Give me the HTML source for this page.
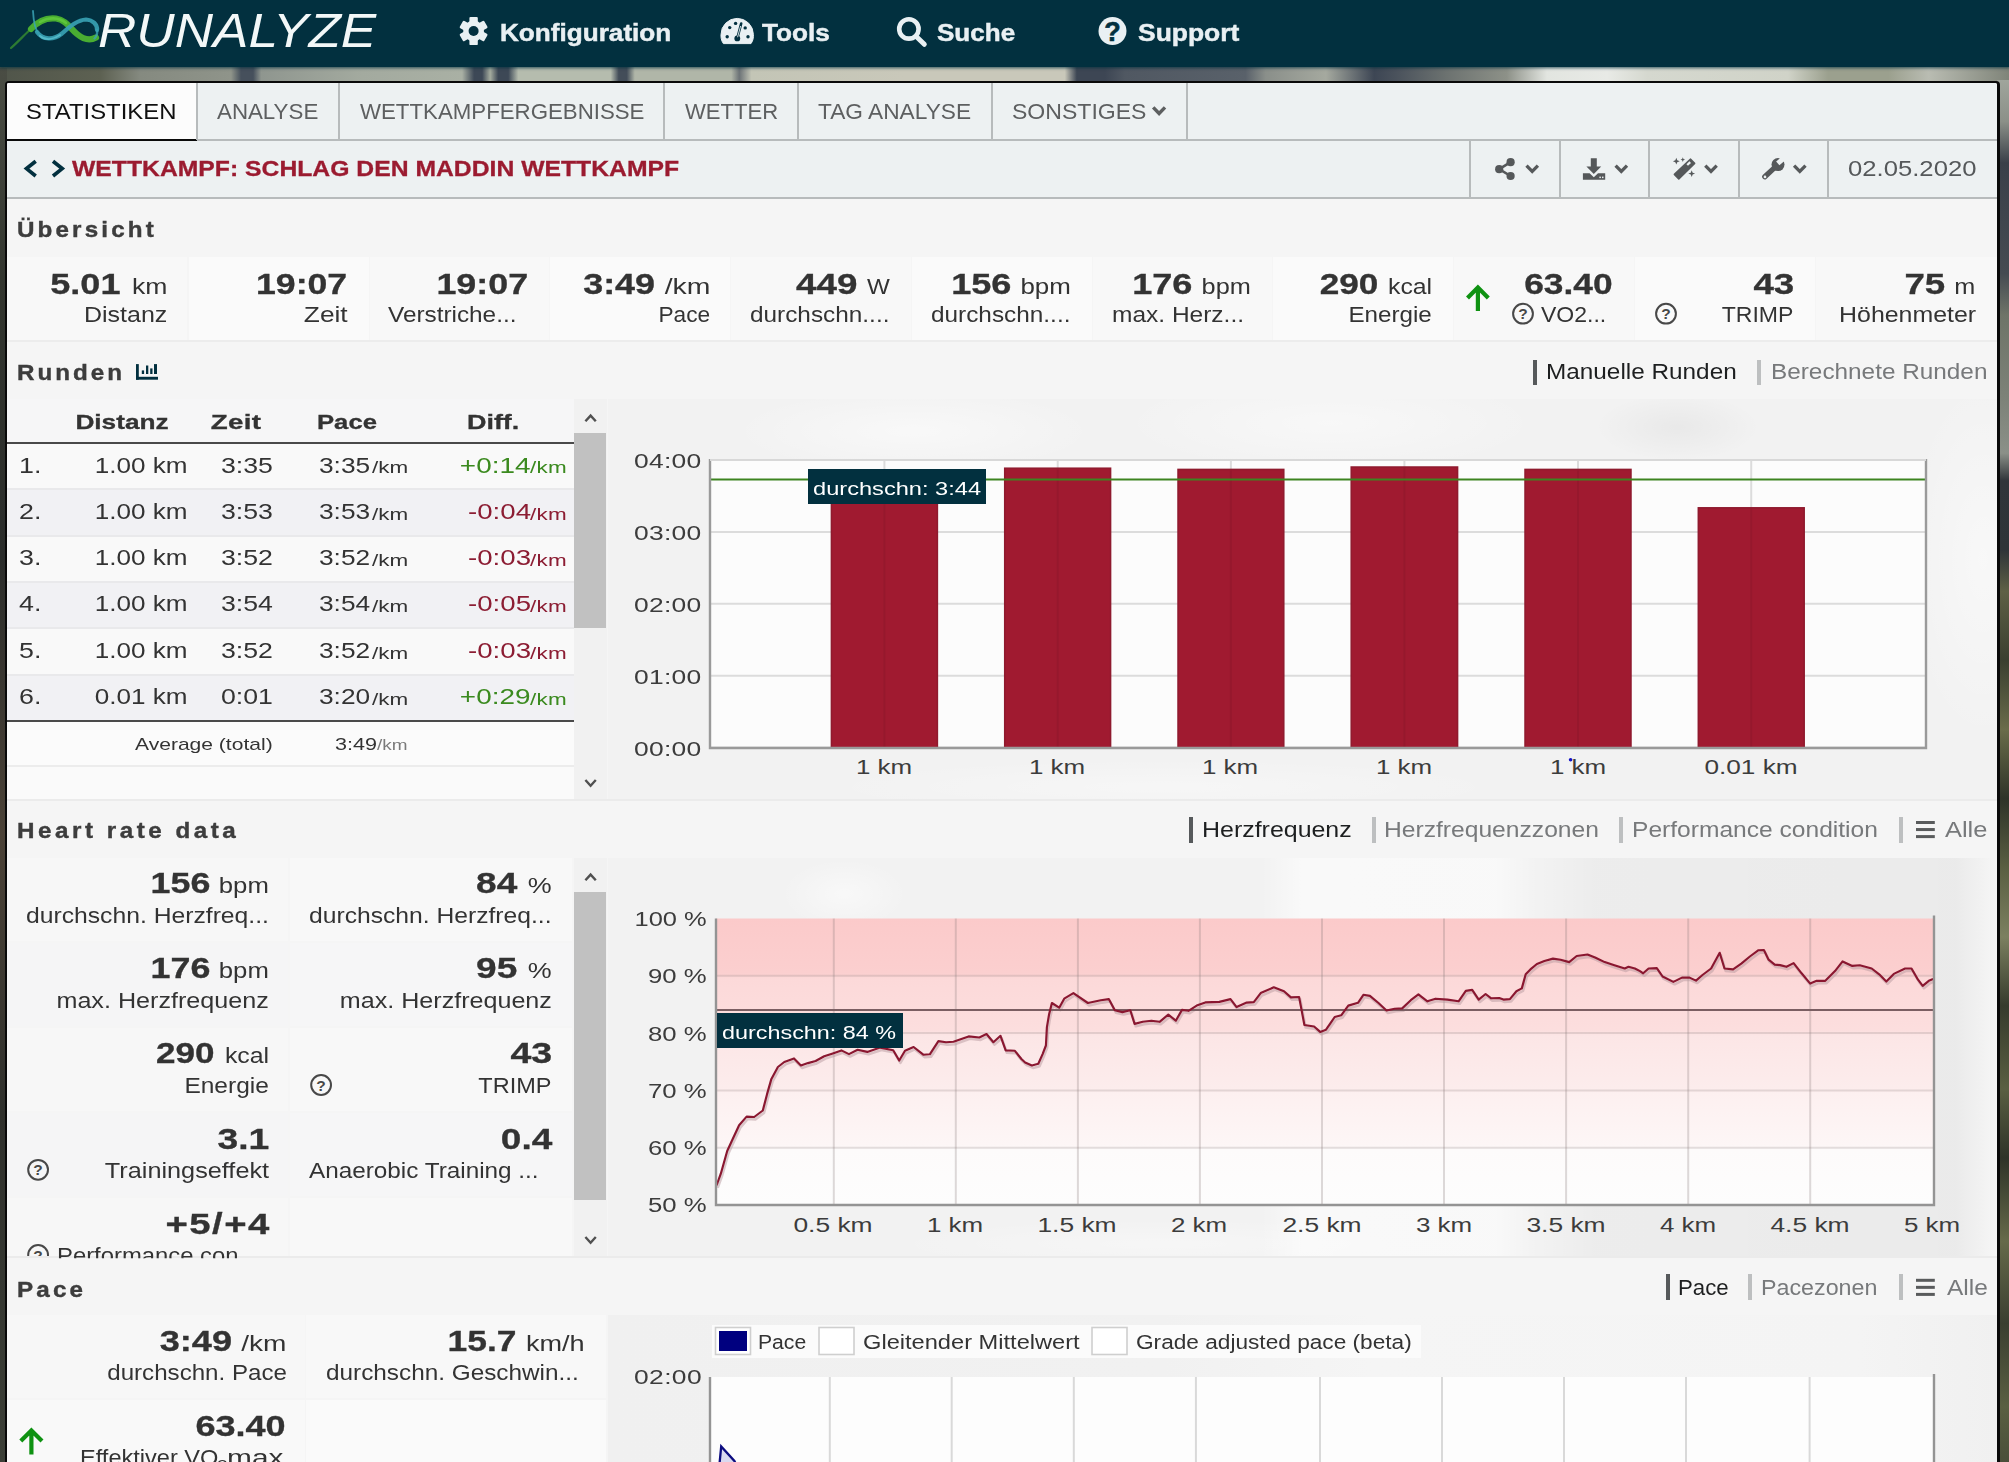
<!DOCTYPE html>
<html lang="de"><head><meta charset="utf-8"><title>RUNALYZE</title>
<style>
html,body{margin:0;padding:0}
body{width:2009px;height:1462px;overflow:hidden;position:relative;background:#6b6f63;font-family:"Liberation Sans",sans-serif}
#page{position:absolute;left:0;top:0;width:2009px;height:1462px;overflow:hidden}
#page div{position:absolute;box-sizing:border-box}
#page svg{position:absolute;overflow:visible}
.t{position:absolute;white-space:nowrap;display:block}
</style></head>
<body><div id="page">
<div style="left:0;top:0;width:2009px;height:1462px;background:linear-gradient(180deg,#5d6458 0,#6e7468 20%,#4b5150 35%,#7b8174 50%,#5b6157 65%,#868b7c 80%,#5a5f55 100%)"></div>
<div style="left:0;top:66px;width:2009px;height:17px;background:linear-gradient(90deg,#50554a 0,#5d6152 5%,#858a80 7%,#8f948a 11.5%,#46505c 12%,#46505c 12.6%,#8f968f 13%,#a3aa9f 18%,#a9b0a4 23%,#3d4856 23.6%,#3d4856 24%,#a5ac9f 24.4%,#3d4856 24.8%,#3d4856 25.3%,#b5bcae 25.8%,#b5bcae 30.4%,#434d59 30.8%,#434d59 31.2%,#b0b6a8 31.6%,#b0b6a8 36.4%,#6c7377 36.8%,#c3c5b6 37.4%,#c9c8ba 45%,#c9c8ba 53%,#3d4654 53.6%,#3d4654 55%,#505862 56%,#59616a 62%,#8a8f8a 63%,#a5a99f 66%,#3d4654 68.4%,#4a525c 69.5%,#6c7270 72%,#8d9188 75%,#e2e5e0 77%,#e8eae6 80%,#d5d8cf 82%,#d0d3c8 89%,#9ba08e 91%,#9ba08e 94%,#b9bcb2 96%,#7f8479 100%)"></div>
<div style="left:0;top:68px;width:7px;height:1394px;background:linear-gradient(180deg,#4a4d44 0,#33362f 15%,#2b2d2b 35%,#4b4237 55%,#2f302c 75%,#3c3f37 100%)"></div>
<div style="left:1997px;top:80px;width:12px;height:1382px;background:linear-gradient(180deg,#a0a59c 0,#8b9088 3%,#3a4049 6%,#454b52 14%,#6e7468 17%,#7d8278 23%,#8b9088 27%,#30353a 29%,#2f3438 34%,#5e6045 37%,#3a3f30 42%,#6a6c4a 47%,#2e3328 52%,#5a5f42 57%,#7c8060 62%,#363b2c 67%,#5a5f42 73%,#2e3328 78%,#666a4a 84%,#3a3f30 90%,#5a5f42 96%,#4a4f3a 100%)"></div>
<div style="left:0;top:0;width:2009px;height:66.5px;background:#02303f;box-shadow:0 0 3px 1px rgba(2,48,63,.75)"></div>
<div style="left:5px;top:81px;width:1995px;height:1400px;background:#0a0a0a;border-radius:4px 4px 0 0"></div>
<div style="left:7px;top:83px;width:1990px;height:1400px;background:#f5f5f5;border-radius:2px 2px 0 0"></div>
<div style="left:7px;top:83px;width:1990px;height:58px;background:#edf1f2;border-bottom:2px solid #b7bbbc;border-radius:2px 2px 0 0"></div>
<div style="left:7px;top:83px;width:190px;height:58px;background:#fcfcfc;border-bottom:2px solid #0a0a0a;border-radius:2px 0 0 0"></div>
<div style="left:196px;top:83px;width:2px;height:57px;background:#b7bbbc;"></div>
<div style="left:338px;top:83px;width:2px;height:57px;background:#b7bbbc;"></div>
<div style="left:663px;top:83px;width:2px;height:57px;background:#b7bbbc;"></div>
<div style="left:797px;top:83px;width:2px;height:57px;background:#b7bbbc;"></div>
<div style="left:991px;top:83px;width:2px;height:57px;background:#b7bbbc;"></div>
<div style="left:1186px;top:83px;width:2px;height:57px;background:#b7bbbc;"></div>
<div style="left:7px;top:141px;width:1990px;height:57.5px;background:#edf1f2;border-bottom:2px solid #b7bbbc"></div>
<div style="left:1469px;top:141px;width:2px;height:56px;background:#b7bbbc;"></div>
<div style="left:1559px;top:141px;width:2px;height:56px;background:#b7bbbc;"></div>
<div style="left:1648px;top:141px;width:2px;height:56px;background:#b7bbbc;"></div>
<div style="left:1738px;top:141px;width:2px;height:56px;background:#b7bbbc;"></div>
<div style="left:1827px;top:141px;width:2px;height:56px;background:#b7bbbc;"></div>
<div style="left:7px;top:198.5px;width:1990px;height:58.5px;background:#f5f5f5;"></div>
<div style="left:7px;top:340px;width:1990px;height:59px;background:#f5f5f5;"></div>
<div style="left:7px;top:799px;width:1990px;height:59px;background:#f5f5f5;border-top:2px solid #ebebeb"></div>
<div style="left:7px;top:1256px;width:1990px;height:59px;background:#f5f5f5;border-top:2px solid #ebebeb"></div>
<div style="left:7px;top:257px;width:179.5px;height:83px;background:#f8f8f8;"></div>
<div style="left:188.5px;top:257px;width:180.0px;height:83px;background:#fafafa;"></div>
<div style="left:369.5px;top:257px;width:179.5px;height:83px;background:#f8f8f8;"></div>
<div style="left:550px;top:257px;width:179.5px;height:83px;background:#fafafa;"></div>
<div style="left:730.5px;top:257px;width:180.5px;height:83px;background:#f8f8f8;"></div>
<div style="left:912px;top:257px;width:179.5px;height:83px;background:#fafafa;"></div>
<div style="left:1092.5px;top:257px;width:179.5px;height:83px;background:#f8f8f8;"></div>
<div style="left:1273px;top:257px;width:180px;height:83px;background:#fafafa;"></div>
<div style="left:1454px;top:257px;width:180px;height:83px;background:#f8f8f8;"></div>
<div style="left:1635px;top:257px;width:180px;height:83px;background:#fafafa;"></div>
<div style="left:1816px;top:257px;width:181px;height:83px;background:#f8f8f8;"></div>
<div style="left:7px;top:340px;width:1990px;height:2px;background:#ececec;"></div>
<div style="left:1533.4px;top:360px;width:4px;height:25px;background:#56595b;"></div>
<div style="left:1757px;top:360px;width:4px;height:25px;background:#bdbfc0;"></div>
<div style="left:1189px;top:817px;width:4px;height:26px;background:#56595b;"></div>
<div style="left:1371.5px;top:817px;width:4px;height:26px;background:#bdbfc0;"></div>
<div style="left:1619px;top:817px;width:4px;height:26px;background:#bdbfc0;"></div>
<div style="left:1899px;top:817px;width:4px;height:26px;background:#bdbfc0;"></div>
<div style="left:1665.5px;top:1274px;width:4px;height:26px;background:#56595b;"></div>
<div style="left:1748.4px;top:1274px;width:4px;height:26px;background:#bdbfc0;"></div>
<div style="left:1898.5px;top:1274px;width:4px;height:26px;background:#bdbfc0;"></div>
<div style="left:7px;top:399px;width:567px;height:400px;background:#fafafa;"></div>
<div style="left:7px;top:399px;width:567px;height:43px;background:#f6f6f7;"></div>
<div style="left:7px;top:442px;width:567px;height:2px;background:#4a4a4a;"></div>
<div style="left:7px;top:444px;width:567px;height:46px;background:#f9f9f9;border-bottom:2px solid #e9e9eb"></div>
<div style="left:7px;top:490px;width:567px;height:47px;background:#f1f1f4;border-bottom:2px solid #e9e9eb"></div>
<div style="left:7px;top:537px;width:567px;height:46px;background:#f9f9f9;border-bottom:2px solid #e9e9eb"></div>
<div style="left:7px;top:583px;width:567px;height:46px;background:#f1f1f4;border-bottom:2px solid #e9e9eb"></div>
<div style="left:7px;top:629px;width:567px;height:47px;background:#f9f9f9;border-bottom:2px solid #e9e9eb"></div>
<div style="left:7px;top:676px;width:567px;height:46px;background:#f1f1f4;"></div>
<div style="left:7px;top:720px;width:567px;height:2px;background:#4a4a4a;"></div>
<div style="left:7px;top:722px;width:567px;height:45px;background:#fbfbfb;border-bottom:2px solid #ececec"></div>
<div style="left:574px;top:399px;width:33px;height:400px;background:#f1f1f1;"></div>
<div style="left:574px;top:433px;width:32px;height:195px;background:#c1c1c1;"></div>
<svg style="left:0;top:0" width="2009" height="1462" viewBox="0 0 2009 1462"><path d="M585.4 421.3 L590.6 415.6 L595.8000000000001 421.3" fill="none" stroke="#505050" stroke-width="2.4"/><path d="M585.4 780 L590.6 785.7 L595.8000000000001 780" fill="none" stroke="#505050" stroke-width="2.4"/></svg>
<div style="left:608px;top:399px;width:1389px;height:400px;background:radial-gradient(ellipse 260px 60px at 22% 8%,rgba(255,255,255,.5),rgba(255,255,255,0) 70%),radial-gradient(ellipse 300px 70px at 52% 6%,rgba(255,255,255,.45),rgba(255,255,255,0) 70%),radial-gradient(ellipse 110px 45px at 77% 7%,rgba(0,0,0,.04),rgba(0,0,0,0) 75%),radial-gradient(ellipse 110px 260px at 99% 40%,rgba(255,255,255,.45),rgba(255,255,255,0) 70%),radial-gradient(ellipse 500px 40px at 40% 97%,rgba(255,255,255,.35),rgba(255,255,255,0) 70%),#f2f2f2;"></div>
<svg style="left:0;top:0" width="2009" height="1462" viewBox="0 0 2009 1462"><rect x="710" y="460" width="1216" height="288" fill="#fcfcfc"/><line x1="710" x2="1926" y1="460.0" y2="460.0" stroke="#dcdcdc" stroke-width="2"/><line x1="710" x2="1926" y1="531.9" y2="531.9" stroke="#dcdcdc" stroke-width="2"/><line x1="710" x2="1926" y1="603.8" y2="603.8" stroke="#dcdcdc" stroke-width="2"/><line x1="710" x2="1926" y1="675.7" y2="675.7" stroke="#dcdcdc" stroke-width="2"/><line x1="710" x2="1926" y1="747.6" y2="747.6" stroke="#dcdcdc" stroke-width="2"/><line x1="884.4" x2="884.4" y1="460" y2="748" stroke="#dcdcdc" stroke-width="2"/><line x1="1057.7" x2="1057.7" y1="460" y2="748" stroke="#dcdcdc" stroke-width="2"/><line x1="1230.9" x2="1230.9" y1="460" y2="748" stroke="#dcdcdc" stroke-width="2"/><line x1="1404.4" x2="1404.4" y1="460" y2="748" stroke="#dcdcdc" stroke-width="2"/><line x1="1578.0" x2="1578.0" y1="460" y2="748" stroke="#dcdcdc" stroke-width="2"/><line x1="1751.2" x2="1751.2" y1="460" y2="748" stroke="#dcdcdc" stroke-width="2"/><rect x="831.4" y="490.2" width="106.0" height="257.8" fill="#a01a30" stroke="#8f1a2e" stroke-width="1.5"/><line x1="884.4" x2="884.4" y1="491.2" y2="748" stroke="#8e182c" stroke-width="2" opacity=".55"/><rect x="1004.7" y="468.2" width="105.9" height="279.8" fill="#a01a30" stroke="#8f1a2e" stroke-width="1.5"/><line x1="1057.7" x2="1057.7" y1="469.2" y2="748" stroke="#8e182c" stroke-width="2" opacity=".55"/><rect x="1178.0" y="469.4" width="105.8" height="278.6" fill="#a01a30" stroke="#8f1a2e" stroke-width="1.5"/><line x1="1230.9" x2="1230.9" y1="470.4" y2="748" stroke="#8e182c" stroke-width="2" opacity=".55"/><rect x="1351.2" y="467.0" width="106.4" height="281.0" fill="#a01a30" stroke="#8f1a2e" stroke-width="1.5"/><line x1="1404.4" x2="1404.4" y1="468.0" y2="748" stroke="#8e182c" stroke-width="2" opacity=".55"/><rect x="1525.0" y="469.4" width="106.0" height="278.6" fill="#a01a30" stroke="#8f1a2e" stroke-width="1.5"/><line x1="1578.0" x2="1578.0" y1="470.4" y2="748" stroke="#8e182c" stroke-width="2" opacity=".55"/><rect x="1698.3" y="507.8" width="105.9" height="240.2" fill="#a01a30" stroke="#8f1a2e" stroke-width="1.5"/><line x1="1751.2" x2="1751.2" y1="508.8" y2="748" stroke="#8e182c" stroke-width="2" opacity=".55"/><line x1="710" x2="1926" y1="479.6" y2="479.6" stroke="#3d8420" stroke-width="2"/><path d="M710 459 V748 H1926 V459" fill="none" stroke="#9a9a9a" stroke-width="2.4"/><line x1="710" x2="1926" y1="460" y2="460" stroke="#d8d8d8" stroke-width="2"/><circle cx="1570.6" cy="759.8" r="1.8" fill="#1212c8"/></svg>
<div style="left:808px;top:469px;width:178px;height:35px;background:#02303f;"></div>
<div style="left:7px;top:858px;width:281px;height:83px;background:#f7f7f7;"></div>
<div style="left:290px;top:858px;width:282px;height:83px;background:#f8f8f8;"></div>
<div style="left:7px;top:943px;width:281px;height:83px;background:#f5f5f6;"></div>
<div style="left:290px;top:943px;width:282px;height:83px;background:#f6f6f7;"></div>
<div style="left:7px;top:1028px;width:281px;height:83px;background:#f7f7f7;"></div>
<div style="left:290px;top:1028px;width:282px;height:83px;background:#f8f8f8;"></div>
<div style="left:7px;top:1113px;width:281px;height:83px;background:#f5f5f6;"></div>
<div style="left:290px;top:1113px;width:282px;height:83px;background:#f6f6f7;"></div>
<div style="left:7px;top:1198px;width:281px;height:58px;background:#f7f7f7;"></div>
<div style="left:290px;top:1198px;width:282px;height:58px;background:#f8f8f8;"></div>
<div style="left:7px;top:858px;width:565px;height:398px;background:#f0f0f1;z-index:-1"></div>
<div style="left:574px;top:858px;width:33px;height:398px;background:#f1f1f1;"></div>
<div style="left:574px;top:892px;width:32px;height:307.5px;background:#c1c1c1;"></div>
<svg style="left:0;top:0" width="2009" height="1462" viewBox="0 0 2009 1462"><path d="M585.4 880.3 L590.6 874.6 L595.8000000000001 880.3" fill="none" stroke="#505050" stroke-width="2.4"/><path d="M585.4 1237 L590.6 1242.7 L595.8000000000001 1237" fill="none" stroke="#505050" stroke-width="2.4"/></svg>
<div style="left:608px;top:858px;width:1389px;height:398px;background:linear-gradient(90deg,rgba(255,255,255,0) 47%,rgba(255,255,255,.55) 50%,rgba(255,255,255,.5) 64%,rgba(255,255,255,0) 67%,rgba(0,0,0,.022) 71%,rgba(0,0,0,.03) 97%,rgba(255,255,255,.3) 100%),radial-gradient(ellipse 90px 50px at 17% 9%,rgba(255,255,255,.5),rgba(255,255,255,0) 70%),radial-gradient(ellipse 400px 36px at 40% 97%,rgba(255,255,255,.35),rgba(255,255,255,0) 70%),#f2f2f2;"></div>
<svg style="left:0;top:0" width="2009" height="1462" viewBox="0 0 2009 1462"><defs><linearGradient id="hrg" x1="0" y1="0" x2="0" y2="1"><stop offset="0" stop-color="#fbcaca"/><stop offset="0.19" stop-color="#fbcfcf"/><stop offset="0.21" stop-color="#fcd9d9"/><stop offset="0.39" stop-color="#fcdede"/><stop offset="0.41" stop-color="#fce6e6"/><stop offset="0.59" stop-color="#fcecec"/><stop offset="0.61" stop-color="#fdf0f0"/><stop offset="0.79" stop-color="#fdf6f6"/><stop offset="0.81" stop-color="#fdfbfb"/><stop offset="1" stop-color="#fdfdfd"/></linearGradient></defs><rect x="716" y="918.5" width="1218" height="286.5" fill="url(#hrg)"/><line x1="716" x2="1934" y1="975.8" y2="975.8" stroke="#8a7a7a" stroke-opacity=".22" stroke-width="2"/><line x1="716" x2="1934" y1="1033.1" y2="1033.1" stroke="#8a7a7a" stroke-opacity=".22" stroke-width="2"/><line x1="716" x2="1934" y1="1090.4" y2="1090.4" stroke="#8a7a7a" stroke-opacity=".22" stroke-width="2"/><line x1="716" x2="1934" y1="1147.7" y2="1147.7" stroke="#8a7a7a" stroke-opacity=".22" stroke-width="2"/><line x1="833.8" x2="833.8" y1="918.5" y2="1205" stroke="#8a7a7a" stroke-opacity=".28" stroke-width="2"/><line x1="955.8" x2="955.8" y1="918.5" y2="1205" stroke="#8a7a7a" stroke-opacity=".28" stroke-width="2"/><line x1="1077.9" x2="1077.9" y1="918.5" y2="1205" stroke="#8a7a7a" stroke-opacity=".28" stroke-width="2"/><line x1="1199.9" x2="1199.9" y1="918.5" y2="1205" stroke="#8a7a7a" stroke-opacity=".28" stroke-width="2"/><line x1="1322.0" x2="1322.0" y1="918.5" y2="1205" stroke="#8a7a7a" stroke-opacity=".28" stroke-width="2"/><line x1="1444.0" x2="1444.0" y1="918.5" y2="1205" stroke="#8a7a7a" stroke-opacity=".28" stroke-width="2"/><line x1="1566.1" x2="1566.1" y1="918.5" y2="1205" stroke="#8a7a7a" stroke-opacity=".28" stroke-width="2"/><line x1="1688.2" x2="1688.2" y1="918.5" y2="1205" stroke="#8a7a7a" stroke-opacity=".28" stroke-width="2"/><line x1="1810.2" x2="1810.2" y1="918.5" y2="1205" stroke="#8a7a7a" stroke-opacity=".28" stroke-width="2"/><path d="M716.5 1185.5 L720.8 1173.7 L727.2 1151.0 L732.6 1139.2 L739.1 1125.2 L746.6 1116.6 L754.2 1117.0 L762.8 1110.5 L767.1 1093.9 L771.4 1078.9 L777.9 1067.0 L784.3 1062.0 L794.0 1058.4 L800.9 1065.5 L808.0 1063.1 L815.6 1061.0 L824.2 1056.2 L832.8 1053.4 L841.4 1050.4 L849.0 1054.1 L857.6 1049.8 L867.3 1051.9 L880.2 1047.6 L893.2 1050.2 L899.2 1060.5 L905.0 1050.8 L913.6 1047.0 L923.3 1054.7 L929.8 1054.3 L938.4 1041.1 L946.0 1042.2 L953.5 1041.8 L968.6 1036.4 L979.4 1037.5 L986.5 1034.0 L993.4 1042.2 L1000.5 1035.8 L1005.7 1050.4 L1014.9 1050.8 L1021.4 1059.0 L1025.4 1062.7 L1025.7 1062.7 L1031.9 1065.5 L1038.3 1063.8 L1042.6 1054.1 L1045.9 1045.5 L1046.9 1027.1 L1049.1 1014.2 L1051.9 1003.0 L1059.2 1007.7 L1064.2 998.7 L1073.4 993.1 L1087.9 1003.0 L1100.8 1000.2 L1108.8 999.1 L1114.8 1010.3 L1122.4 1012.1 L1130.3 1010.3 L1134.6 1023.9 L1142.8 1021.8 L1151.4 1020.7 L1159.6 1021.8 L1168.3 1014.6 L1175.8 1020.7 L1182.0 1009.9 L1188.5 1010.8 L1196.7 1005.6 L1205.3 1002.4 L1219.3 1001.9 L1230.5 999.1 L1236.6 1007.1 L1246.7 1002.6 L1253.8 1002.1 L1260.7 993.1 L1273.8 987.3 L1284.0 991.2 L1290.9 997.4 L1299.1 997.0 L1304.4 1025.0 L1314.1 1026.5 L1320.2 1031.9 L1326.0 1029.7 L1330.0 1023.9 L1334.7 1017.0 L1341.2 1015.3 L1348.3 1005.6 L1358.0 1002.8 L1363.4 994.8 L1369.9 995.9 L1378.5 1003.0 L1386.5 1010.5 L1394.6 1008.8 L1402.2 1008.4 L1410.8 1000.2 L1418.4 994.4 L1427.4 1001.3 L1435.6 998.7 L1447.4 999.6 L1458.6 1001.3 L1465.8 990.9 L1472.2 989.9 L1478.7 999.6 L1485.6 994.0 L1491.2 998.3 L1499.2 998.0 L1503.5 999.6 L1509.9 999.1 L1516.4 991.2 L1521.8 988.4 L1525.7 974.3 L1530.4 969.4 L1536.9 964.0 L1544.4 961.0 L1553.0 958.6 L1560.6 959.7 L1569.2 962.1 L1576.7 956.0 L1587.5 954.5 L1595.1 957.5 L1604.7 962.1 L1614.4 965.3 L1624.8 968.5 L1628.5 966.8 L1634.9 968.5 L1640.0 971.1 L1643.2 973.3 L1648.6 968.5 L1656.8 968.1 L1662.6 976.5 L1673.4 981.9 L1682.0 977.6 L1689.6 977.6 L1696.0 980.6 L1702.5 975.0 L1711.1 968.5 L1719.7 952.8 L1724.5 968.5 L1733.1 969.4 L1741.3 963.6 L1749.9 956.5 L1758.5 950.2 L1763.9 950.0 L1768.6 959.7 L1774.7 964.6 L1780.1 965.1 L1786.5 966.8 L1793.6 963.1 L1801.6 973.3 L1810.2 983.6 L1816.7 980.8 L1825.3 980.8 L1835.0 971.1 L1842.6 961.4 L1852.3 965.9 L1859.8 965.3 L1871.7 968.5 L1879.2 974.3 L1886.3 981.5 L1893.8 973.9 L1905.1 968.5 L1911.5 968.5 L1918.0 979.7 L1922.7 985.8 L1928.8 980.8 L1933.1 979.1" fill="none" stroke="#b89aa0" stroke-opacity=".5" stroke-width="2.6" transform="translate(1.2,2.4)" stroke-linejoin="round"/><line x1="716" x2="1934" y1="1010" y2="1010" stroke="#7b5e62" stroke-width="2"/><path d="M716.5 1185.5 L720.8 1173.7 L727.2 1151.0 L732.6 1139.2 L739.1 1125.2 L746.6 1116.6 L754.2 1117.0 L762.8 1110.5 L767.1 1093.9 L771.4 1078.9 L777.9 1067.0 L784.3 1062.0 L794.0 1058.4 L800.9 1065.5 L808.0 1063.1 L815.6 1061.0 L824.2 1056.2 L832.8 1053.4 L841.4 1050.4 L849.0 1054.1 L857.6 1049.8 L867.3 1051.9 L880.2 1047.6 L893.2 1050.2 L899.2 1060.5 L905.0 1050.8 L913.6 1047.0 L923.3 1054.7 L929.8 1054.3 L938.4 1041.1 L946.0 1042.2 L953.5 1041.8 L968.6 1036.4 L979.4 1037.5 L986.5 1034.0 L993.4 1042.2 L1000.5 1035.8 L1005.7 1050.4 L1014.9 1050.8 L1021.4 1059.0 L1025.4 1062.7 L1025.7 1062.7 L1031.9 1065.5 L1038.3 1063.8 L1042.6 1054.1 L1045.9 1045.5 L1046.9 1027.1 L1049.1 1014.2 L1051.9 1003.0 L1059.2 1007.7 L1064.2 998.7 L1073.4 993.1 L1087.9 1003.0 L1100.8 1000.2 L1108.8 999.1 L1114.8 1010.3 L1122.4 1012.1 L1130.3 1010.3 L1134.6 1023.9 L1142.8 1021.8 L1151.4 1020.7 L1159.6 1021.8 L1168.3 1014.6 L1175.8 1020.7 L1182.0 1009.9 L1188.5 1010.8 L1196.7 1005.6 L1205.3 1002.4 L1219.3 1001.9 L1230.5 999.1 L1236.6 1007.1 L1246.7 1002.6 L1253.8 1002.1 L1260.7 993.1 L1273.8 987.3 L1284.0 991.2 L1290.9 997.4 L1299.1 997.0 L1304.4 1025.0 L1314.1 1026.5 L1320.2 1031.9 L1326.0 1029.7 L1330.0 1023.9 L1334.7 1017.0 L1341.2 1015.3 L1348.3 1005.6 L1358.0 1002.8 L1363.4 994.8 L1369.9 995.9 L1378.5 1003.0 L1386.5 1010.5 L1394.6 1008.8 L1402.2 1008.4 L1410.8 1000.2 L1418.4 994.4 L1427.4 1001.3 L1435.6 998.7 L1447.4 999.6 L1458.6 1001.3 L1465.8 990.9 L1472.2 989.9 L1478.7 999.6 L1485.6 994.0 L1491.2 998.3 L1499.2 998.0 L1503.5 999.6 L1509.9 999.1 L1516.4 991.2 L1521.8 988.4 L1525.7 974.3 L1530.4 969.4 L1536.9 964.0 L1544.4 961.0 L1553.0 958.6 L1560.6 959.7 L1569.2 962.1 L1576.7 956.0 L1587.5 954.5 L1595.1 957.5 L1604.7 962.1 L1614.4 965.3 L1624.8 968.5 L1628.5 966.8 L1634.9 968.5 L1640.0 971.1 L1643.2 973.3 L1648.6 968.5 L1656.8 968.1 L1662.6 976.5 L1673.4 981.9 L1682.0 977.6 L1689.6 977.6 L1696.0 980.6 L1702.5 975.0 L1711.1 968.5 L1719.7 952.8 L1724.5 968.5 L1733.1 969.4 L1741.3 963.6 L1749.9 956.5 L1758.5 950.2 L1763.9 950.0 L1768.6 959.7 L1774.7 964.6 L1780.1 965.1 L1786.5 966.8 L1793.6 963.1 L1801.6 973.3 L1810.2 983.6 L1816.7 980.8 L1825.3 980.8 L1835.0 971.1 L1842.6 961.4 L1852.3 965.9 L1859.8 965.3 L1871.7 968.5 L1879.2 974.3 L1886.3 981.5 L1893.8 973.9 L1905.1 968.5 L1911.5 968.5 L1918.0 979.7 L1922.7 985.8 L1928.8 980.8 L1933.1 979.1" fill="none" stroke="#8a1730" stroke-width="2.15" stroke-linejoin="round"/><path d="M716 918.5 V1205 H1934 V915.5" fill="none" stroke="#949494" stroke-width="2.4"/></svg>
<div style="left:717px;top:1013px;width:186px;height:35px;background:#02303f;"></div>
<div style="left:7px;top:1315px;width:298px;height:83px;background:#f7f7f7;"></div>
<div style="left:306px;top:1315px;width:300px;height:83px;background:#f8f8f8;"></div>
<div style="left:7px;top:1400px;width:298px;height:70px;background:#f9f9f9;"></div>
<div style="left:306px;top:1400px;width:300px;height:70px;background:#fafafa;"></div>
<div style="left:7px;top:1315px;width:600px;height:150px;background:#f0f0f1;z-index:-1"></div>
<div style="left:608px;top:1315px;width:1389px;height:150px;background:linear-gradient(90deg,#f0f0f0 0,#f1f1f1 40%,#f5f5f5 55%,#f4f4f4 90%,#f0f0f0 100%);"></div>
<div style="left:712px;top:1325px;width:709px;height:33px;background:#fbfbfb;"></div>
<svg style="left:0;top:0" width="2009" height="1462" viewBox="0 0 2009 1462"><rect x="710" y="1377" width="1224" height="90" fill="#fdfdfd"/><line x1="829.8" x2="829.8" y1="1377" y2="1462" stroke="#d9d9d9" stroke-width="2"/><line x1="951.7" x2="951.7" y1="1377" y2="1462" stroke="#d9d9d9" stroke-width="2"/><line x1="1073.8" x2="1073.8" y1="1377" y2="1462" stroke="#d9d9d9" stroke-width="2"/><line x1="1195.9" x2="1195.9" y1="1377" y2="1462" stroke="#d9d9d9" stroke-width="2"/><line x1="1320" x2="1320" y1="1377" y2="1462" stroke="#d9d9d9" stroke-width="2"/><line x1="1442" x2="1442" y1="1377" y2="1462" stroke="#d9d9d9" stroke-width="2"/><line x1="1564" x2="1564" y1="1377" y2="1462" stroke="#d9d9d9" stroke-width="2"/><line x1="1686" x2="1686" y1="1377" y2="1462" stroke="#d9d9d9" stroke-width="2"/><line x1="1809.6" x2="1809.6" y1="1377" y2="1462" stroke="#d9d9d9" stroke-width="2"/><path d="M710 1377 V1462 M1934 1374 V1462" fill="none" stroke="#949494" stroke-width="2.4"/><path d="M719.3 1466 L721.2 1446.4 L734.4 1461 L737 1466 Z" fill="#d9d9f0"/><path d="M719.3 1466 L721.2 1446.4 L734.4 1461 L737 1466" fill="none" stroke="#0c0c80" stroke-width="2.3" stroke-linejoin="miter"/><rect x="715.5" y="1327.5" width="35" height="27" fill="#ffffff" stroke="#cfcfcf" stroke-width="1.6"/><rect x="719.0" y="1331" width="28" height="20" fill="#00007f"/><rect x="819" y="1327.5" width="35" height="27" fill="#ffffff" stroke="#cfcfcf" stroke-width="1.6"/><rect x="1092" y="1327.5" width="35" height="27" fill="#ffffff" stroke="#cfcfcf" stroke-width="1.6"/></svg>
<svg style="left:0;top:0" width="2009" height="1462" viewBox="0 0 2009 1462"><defs><filter id="lb" x="-20%" y="-20%" width="140%" height="140%"><feGaussianBlur stdDeviation="0.75"/></filter></defs><g fill="none" stroke-linecap="round" filter="url(#lb)"><path d="M11 48 C19 41 25 34 32 28" stroke="#3f9a2c" stroke-width="2.2" opacity=".7"/><path d="M31 29 C38 21 47 17.5 56 18.5 C66 20 70 28 77 34 C83 39 90 41 96 37.5" stroke="#48ad30" stroke-width="6.2"/><path d="M40 22 C48 17 59 17 66 23" stroke="#62c93c" stroke-width="2.6" opacity=".85"/><path d="M33 11 C33.5 21 34.5 29 39 34.5" stroke="#3aa3b5" stroke-width="1.8" opacity=".85"/><path d="M37 32 C43 40.5 54 40 62 33.5 C69 27.5 77 20 86 19.5 C93 20 97.5 24.5 97 30" stroke="#37a0b2" stroke-width="4.2" opacity=".92"/><path d="M40 36 C46 41 54 39 60 35" stroke="#63c8d6" stroke-width="2" opacity=".7"/><path d="M97 30 C97.5 34 96.5 36.5 94.5 38.5" stroke="#3aa3b5" stroke-width="2.4" opacity=".8"/></g><g fill="#e9f0f3"><circle cx="473.6" cy="31.0" r="10.4"/><rect x="469.40000000000003" y="16.9" width="8.4" height="7" rx="1.2" transform="rotate(0 473.6 31.0)"/><rect x="469.40000000000003" y="16.9" width="8.4" height="7" rx="1.2" transform="rotate(60 473.6 31.0)"/><rect x="469.40000000000003" y="16.9" width="8.4" height="7" rx="1.2" transform="rotate(120 473.6 31.0)"/><rect x="469.40000000000003" y="16.9" width="8.4" height="7" rx="1.2" transform="rotate(180 473.6 31.0)"/><rect x="469.40000000000003" y="16.9" width="8.4" height="7" rx="1.2" transform="rotate(240 473.6 31.0)"/><rect x="469.40000000000003" y="16.9" width="8.4" height="7" rx="1.2" transform="rotate(300 473.6 31.0)"/></g><circle cx="473.6" cy="31.0" r="5" fill="#02303f"/><path d="M723.4 43.6 C721.2 40.6 720.8 37 721 34.6 A16.2 16.2 0 0 1 753.4 34.6 C753.6 37 753.2 40.6 751 43.6 Z" fill="#e9f0f3" stroke="#e9f0f3" stroke-width="1" stroke-linejoin="round"/><circle cx="727.2" cy="36.7" r="1.7" fill="#02303f"/><circle cx="729.7" cy="27.6" r="1.7" fill="#02303f"/><circle cx="745.2" cy="27.9" r="1.7" fill="#02303f"/><circle cx="748.0" cy="36.7" r="1.7" fill="#02303f"/><circle cx="735.6" cy="23.4" r="1.7" fill="#02303f"/><path d="M737.5 37.5 L741.2 23.5" stroke="#02303f" stroke-width="2.6" stroke-linecap="round"/><circle cx="737.3" cy="38.4" r="2.9" fill="#02303f"/><path d="M737.6 37.2 L740.6 26" stroke="#e9f0f3" stroke-width="0.9"/><circle cx="908.9" cy="28.9" r="9.7" fill="none" stroke="#e9f0f3" stroke-width="4.6"/><path d="M916.5 36.8 L924.3 44.3" stroke="#e9f0f3" stroke-width="5" stroke-linecap="round"/><circle cx="1112.5" cy="31.1" r="14" fill="#e9f0f3"/><text x="1112.6" y="40.6" font-family="Liberation Sans" font-weight="700" font-size="27" text-anchor="middle" fill="#02303f" stroke="#02303f" stroke-width="0.6">?</text><path d="M1153.2 107.3 L1159.1 113.5 L1165.0 107.3" fill="none" stroke="#5d5f60" stroke-width="3.4" transform="rotate(0 1159.1 110.4)"/><path d="M23.7 164.0 L31.1 173.2 L38.5 164.0" fill="none" stroke="#02303f" stroke-width="3.7" transform="rotate(90 31.1 168.6)"/><path d="M50.2 164.0 L57.6 173.2 L65.0 164.0" fill="none" stroke="#02303f" stroke-width="3.7" transform="rotate(-90 57.6 168.6)"/><path d="M1526.5 165.6 L1532.2 171.4 L1537.9 165.6" fill="none" stroke="#56595b" stroke-width="3.3" transform="rotate(0 1532.2 168.5)"/><path d="M1615.6 165.6 L1621.3 171.4 L1627.0 165.6" fill="none" stroke="#56595b" stroke-width="3.3" transform="rotate(0 1621.3 168.5)"/><path d="M1705.3 165.6 L1711.0 171.4 L1716.7 165.6" fill="none" stroke="#56595b" stroke-width="3.3" transform="rotate(0 1711 168.5)"/><path d="M1794.1 165.6 L1799.8 171.4 L1805.5 165.6" fill="none" stroke="#56595b" stroke-width="3.3" transform="rotate(0 1799.8 168.5)"/><g fill="#55585a" stroke="#55585a"><circle cx="1499.2" cy="169.2" r="4.1" stroke="none"/><circle cx="1510.6" cy="162.2" r="4.1" stroke="none"/><circle cx="1510.6" cy="176" r="4.1" stroke="none"/><path d="M1499.2 169.2 L1510.6 162.2 M1499.2 169.2 L1510.6 176" stroke-width="2.6" fill="none"/></g><path d="M1590.8 158.2 H1596.8 V166.4 H1601.2 L1593.8 173.9 L1586.4 166.4 H1590.8 Z" fill="#55585a"/><path d="M1582.9 173.2 H1589.6 L1593.8 177.2 L1598 173.2 H1605.2 V179.8 H1582.9 Z" fill="#55585a"/><rect x="1599.4" y="176.6" width="1.5" height="1.5" fill="#edf1f2"/><rect x="1602" y="176.6" width="1.5" height="1.5" fill="#edf1f2"/><path d="M1674.4 174.4 L1690.6 159.2 L1694.6 163.4 L1678.8 179 Z" fill="#55585a" stroke="#55585a" stroke-width="1.6" stroke-linejoin="round"/><path d="M1687.2 165 L1690.2 162.2" stroke="#edf1f2" stroke-width="2.3"/><path d="M1676.3 157.79999999999998 L1677.252 160.248 L1679.7 161.2 L1677.252 162.152 L1676.3 164.6 L1675.348 162.152 L1672.8999999999999 161.2 L1675.348 160.248 Z" fill="#55585a"/><path d="M1682.8 157.29999999999998 L1683.444 158.956 L1685.1 159.6 L1683.444 160.244 L1682.8 161.9 L1682.156 160.244 L1680.5 159.6 L1682.156 158.956 Z" fill="#55585a"/><path d="M1691.7 170.2 L1692.652 172.648 L1695.1000000000001 173.6 L1692.652 174.552 L1691.7 177.0 L1690.748 174.552 L1688.3 173.6 L1690.748 172.648 Z" fill="#55585a"/><path d="M1764.8 176.8 L1776 166.4" stroke="#55585a" stroke-width="5.3" stroke-linecap="round" fill="none"/><circle cx="1778" cy="164.6" r="6.5" fill="#55585a"/><rect x="0.6" y="-2.5" width="11" height="5" fill="#edf1f2" transform="translate(1777.3 163.7) rotate(-40)"/><circle cx="1765" cy="176.9" r="1.35" fill="#edf1f2"/><g fill="#02303f"><rect x="136" y="364.1" width="2.8" height="15.6"/><rect x="136" y="376.8" width="22" height="2.9"/><rect x="141.8" y="370.4" width="2.3" height="3.6"/><rect x="146" y="365.5" width="2.3" height="8.5"/><rect x="150.2" y="368.4" width="2.3" height="5.6"/><rect x="154" y="364.1" width="3" height="9.9"/></g><circle cx="1523" cy="313.7" r="9.9" fill="none" stroke="#484848" stroke-width="2"/><text x="1523" y="319.3" font-family="Liberation Sans" font-weight="700" font-size="15.5" text-anchor="middle" fill="#484848">?</text><circle cx="1666" cy="313.7" r="9.9" fill="none" stroke="#484848" stroke-width="2"/><text x="1666" y="319.3" font-family="Liberation Sans" font-weight="700" font-size="15.5" text-anchor="middle" fill="#484848">?</text><circle cx="321.1" cy="1085" r="9.9" fill="none" stroke="#484848" stroke-width="2"/><text x="321.1" y="1090.6" font-family="Liberation Sans" font-weight="700" font-size="15.5" text-anchor="middle" fill="#484848">?</text><circle cx="38.1" cy="1169.8" r="9.9" fill="none" stroke="#484848" stroke-width="2"/><text x="38.1" y="1175.3999999999999" font-family="Liberation Sans" font-weight="700" font-size="15.5" text-anchor="middle" fill="#484848">?</text><g clip-path="url(#cq)"><circle cx="38.1" cy="1255" r="9.9" fill="none" stroke="#484848" stroke-width="2"/><text x="38.1" y="1260.6" font-family="Liberation Sans" font-weight="700" font-size="15.5" text-anchor="middle" fill="#484848">?</text></g><defs><clipPath id="cq"><rect x="20" y="1240" width="40" height="16"/></clipPath></defs><path d="M1477.9 310.9 V288.1 M1467.5 297.9 L1477.9 287.5 L1488.3000000000002 297.9" fill="none" stroke="#0f9212" stroke-width="4.2" stroke-linejoin="miter"/><path d="M31.4 1454.5 V1431 M20.799999999999997 1441.0 L31.4 1430.4 L42.0 1441.0" fill="none" stroke="#0f9212" stroke-width="4.2" stroke-linejoin="miter"/><rect x="1916" y="821.00" width="18.8" height="3" fill="#595b5c"/><rect x="1916" y="828.05" width="18.8" height="3" fill="#595b5c"/><rect x="1916" y="835.10" width="18.8" height="3" fill="#595b5c"/><rect x="1916" y="1278.80" width="18.8" height="3" fill="#595b5c"/><rect x="1916" y="1285.85" width="18.8" height="3" fill="#595b5c"/><rect x="1916" y="1292.90" width="18.8" height="3" fill="#595b5c"/></svg>
<span class="t" id="t0" style="top:100.95px;font-size:22.5px;line-height:22.5px;color:#101010;left:25.76px;transform:scaleX(1.0620);transform-origin:0 50%">STATISTIKEN</span>
<span class="t" id="t1" style="top:100.95px;font-size:22.5px;line-height:22.5px;color:#5d5f60;left:217.16px;transform:scaleX(0.9915);transform-origin:0 50%">ANALYSE</span>
<span class="t" id="t2" style="top:100.95px;font-size:22.5px;line-height:22.5px;color:#5d5f60;left:359.76px;transform:scaleX(0.9893);transform-origin:0 50%">WETTKAMPFERGEBNISSE</span>
<span class="t" id="t3" style="top:100.95px;font-size:22.5px;line-height:22.5px;color:#5d5f60;left:684.96px;transform:scaleX(0.9818);transform-origin:0 50%">WETTER</span>
<span class="t" id="t4" style="top:100.95px;font-size:22.5px;line-height:22.5px;color:#5d5f60;left:818.16px;transform:scaleX(1.0088);transform-origin:0 50%">TAG ANALYSE</span>
<span class="t" id="t5" style="top:100.95px;font-size:22.5px;line-height:22.5px;color:#5d5f60;left:1011.76px;transform:scaleX(1.0243);transform-origin:0 50%">SONSTIGES</span>
<span class="t" id="t6" style="top:158.15px;font-size:22.5px;line-height:22.5px;color:#9b1b30;font-weight:700;left:72.16px;transform:scaleX(1.0989);transform-origin:0 50%;-webkit-text-stroke:0.3px #9b1b30">WETTKAMPF: SCHLAG DEN MADDIN WETTKAMPF</span>
<span class="t" id="t7" style="top:158.05px;font-size:22.5px;line-height:22.5px;color:#55585a;left:1848.06px;transform:scaleX(1.1407);transform-origin:0 50%">02.05.2020</span>
<span class="t" id="t8" style="top:218.88px;font-size:22px;line-height:22px;color:#3d3d3d;font-weight:700;letter-spacing:2.85px;left:17.49px;transform:scaleX(1.1000);transform-origin:0 50%;-webkit-text-stroke:0.4px #3d3d3d">Übersicht</span>
<span class="t" id="t9" style="top:361.58px;font-size:22px;line-height:22px;color:#3d3d3d;font-weight:700;letter-spacing:2.72px;left:17.19px;transform:scaleX(1.1000);transform-origin:0 50%;-webkit-text-stroke:0.4px #3d3d3d">Runden</span>
<span class="t" id="t10" style="top:820.38px;font-size:22px;line-height:22px;color:#3d3d3d;font-weight:700;letter-spacing:3.20px;left:17.09px;transform:scaleX(1.1000);transform-origin:0 50%;-webkit-text-stroke:0.4px #3d3d3d">Heart rate data</span>
<span class="t" id="t11" style="top:1278.68px;font-size:22px;line-height:22px;color:#3d3d3d;font-weight:700;letter-spacing:2.88px;left:17.19px;transform:scaleX(1.1000);transform-origin:0 50%;-webkit-text-stroke:0.4px #3d3d3d">Pace</span>
<span class="t" id="t12" style="top:275.58px;font-size:22px;line-height:22px;color:#333;right:1841.99px;transform:scaleX(1.2077);transform-origin:100% 50%">km</span>
<span class="t" id="t13" style="top:269.65px;font-size:29px;line-height:29px;color:#333;font-weight:700;right:1888.11px;transform:scaleX(1.2433);transform-origin:100% 50%;-webkit-text-stroke:0.3px #333">5.01</span>
<span class="t" id="t14" style="top:304.08px;font-size:22px;line-height:22px;color:#333;right:1841.99px;transform:scaleX(1.1371);transform-origin:100% 50%">Distanz</span>
<span class="t" id="t15" style="top:269.65px;font-size:29px;line-height:29px;color:#333;font-weight:700;right:1661.40px;transform:scaleX(1.2294);transform-origin:100% 50%;-webkit-text-stroke:0.3px #333">19:07</span>
<span class="t" id="t16" style="top:304.08px;font-size:22px;line-height:22px;color:#333;right:1661.79px;transform:scaleX(1.1944);transform-origin:100% 50%">Zeit</span>
<span class="t" id="t17" style="top:269.65px;font-size:29px;line-height:29px;color:#333;font-weight:700;right:1480.80px;transform:scaleX(1.2375);transform-origin:100% 50%;-webkit-text-stroke:0.3px #333">19:07</span>
<span class="t" id="t18" style="top:304.08px;font-size:22px;line-height:22px;color:#333;left:387.99px;transform:scaleX(1.1056);transform-origin:0 50%">Verstriche...</span>
<span class="t" id="t19" style="top:275.58px;font-size:22px;line-height:22px;color:#333;right:1298.99px;transform:scaleX(1.2896);transform-origin:100% 50%">/km</span>
<span class="t" id="t20" style="top:269.65px;font-size:29px;line-height:29px;color:#333;font-weight:700;right:1353.80px;transform:scaleX(1.2385);transform-origin:100% 50%;-webkit-text-stroke:0.3px #333">3:49</span>
<span class="t" id="t21" style="top:304.08px;font-size:22px;line-height:22px;color:#333;right:1298.99px;transform:scaleX(1.0312);transform-origin:100% 50%">Pace</span>
<span class="t" id="t22" style="top:275.58px;font-size:22px;line-height:22px;color:#333;right:1118.79px;transform:scaleX(1.0989);transform-origin:100% 50%">W</span>
<span class="t" id="t23" style="top:269.65px;font-size:29px;line-height:29px;color:#333;font-weight:700;right:1151.30px;transform:scaleX(1.2686);transform-origin:100% 50%;-webkit-text-stroke:0.3px #333">449</span>
<span class="t" id="t24" style="top:304.08px;font-size:22px;line-height:22px;color:#333;left:750.39px;transform:scaleX(1.1069);transform-origin:0 50%">durchschn....</span>
<span class="t" id="t25" style="top:275.58px;font-size:22px;line-height:22px;color:#333;right:938.29px;transform:scaleX(1.1781);transform-origin:100% 50%">bpm</span>
<span class="t" id="t26" style="top:269.65px;font-size:29px;line-height:29px;color:#333;font-weight:700;right:997.40px;transform:scaleX(1.2438);transform-origin:100% 50%;-webkit-text-stroke:0.3px #333">156</span>
<span class="t" id="t27" style="top:304.08px;font-size:22px;line-height:22px;color:#333;left:931.09px;transform:scaleX(1.1069);transform-origin:0 50%">durchschn....</span>
<span class="t" id="t28" style="top:275.58px;font-size:22px;line-height:22px;color:#333;right:757.79px;transform:scaleX(1.1501);transform-origin:100% 50%">bpm</span>
<span class="t" id="t29" style="top:269.65px;font-size:29px;line-height:29px;color:#333;font-weight:700;right:816.40px;transform:scaleX(1.2438);transform-origin:100% 50%;-webkit-text-stroke:0.3px #333">176</span>
<span class="t" id="t30" style="top:304.08px;font-size:22px;line-height:22px;color:#333;left:1111.79px;transform:scaleX(1.1134);transform-origin:0 50%">max. Herz...</span>
<span class="t" id="t31" style="top:275.58px;font-size:22px;line-height:22px;color:#333;right:576.79px;transform:scaleX(1.1277);transform-origin:100% 50%">kcal</span>
<span class="t" id="t32" style="top:269.65px;font-size:29px;line-height:29px;color:#333;font-weight:700;right:630.50px;transform:scaleX(1.2128);transform-origin:100% 50%;-webkit-text-stroke:0.3px #333">290</span>
<span class="t" id="t33" style="top:304.08px;font-size:22px;line-height:22px;color:#333;right:576.79px;transform:scaleX(1.0999);transform-origin:100% 50%">Energie</span>
<span class="t" id="t34" style="top:269.65px;font-size:29px;line-height:29px;color:#333;font-weight:700;right:396.00px;transform:scaleX(1.2179);transform-origin:100% 50%;-webkit-text-stroke:0.3px #333">63.40</span>
<span class="t" id="t35" style="top:304.08px;font-size:22px;line-height:22px;color:#333;left:1541.19px;transform:scaleX(1.0459);transform-origin:0 50%">VO2...</span>
<span class="t" id="t36" style="top:269.65px;font-size:29px;line-height:29px;color:#333;font-weight:700;right:214.81px;transform:scaleX(1.2673);transform-origin:100% 50%;-webkit-text-stroke:0.3px #333">43</span>
<span class="t" id="t37" style="top:304.08px;font-size:22px;line-height:22px;color:#333;right:215.19px;transform:scaleX(1.0477);transform-origin:100% 50%">TRIMP</span>
<span class="t" id="t38" style="top:275.58px;font-size:22px;line-height:22px;color:#333;right:33.39px;transform:scaleX(1.1469);transform-origin:100% 50%">m</span>
<span class="t" id="t39" style="top:269.65px;font-size:29px;line-height:29px;color:#333;font-weight:700;right:64.21px;transform:scaleX(1.2642);transform-origin:100% 50%;-webkit-text-stroke:0.3px #333">75</span>
<span class="t" id="t40" style="top:304.08px;font-size:22px;line-height:22px;color:#333;right:33.39px;transform:scaleX(1.1317);transform-origin:100% 50%">Höhenmeter</span>
<span class="t" id="t41" style="top:361.08px;font-size:22px;line-height:22px;color:#1d1f20;left:1546.29px;transform:scaleX(1.1058);transform-origin:0 50%">Manuelle Runden</span>
<span class="t" id="t42" style="top:361.08px;font-size:22px;line-height:22px;color:#77797b;left:1770.79px;transform:scaleX(1.1059);transform-origin:0 50%">Berechnete Runden</span>
<span class="t" id="t43" style="top:819.08px;font-size:22px;line-height:22px;color:#1d1f20;left:1201.99px;transform:scaleX(1.1336);transform-origin:0 50%">Herzfrequenz</span>
<span class="t" id="t44" style="top:819.08px;font-size:22px;line-height:22px;color:#77797b;left:1384.29px;transform:scaleX(1.1193);transform-origin:0 50%">Herzfrequenzzonen</span>
<span class="t" id="t45" style="top:819.08px;font-size:22px;line-height:22px;color:#77797b;left:1631.79px;transform:scaleX(1.1172);transform-origin:0 50%">Performance condition</span>
<span class="t" id="t46" style="top:819.08px;font-size:22px;line-height:22px;color:#77797b;left:1945.39px;transform:scaleX(1.1563);transform-origin:0 50%">Alle</span>
<span class="t" id="t47" style="top:1277.08px;font-size:22px;line-height:22px;color:#1d1f20;left:1677.79px;transform:scaleX(1.0112);transform-origin:0 50%">Pace</span>
<span class="t" id="t48" style="top:1277.08px;font-size:22px;line-height:22px;color:#77797b;left:1761.19px;transform:scaleX(1.0575);transform-origin:0 50%">Pacezonen</span>
<span class="t" id="t49" style="top:1277.08px;font-size:22px;line-height:22px;color:#77797b;left:1946.59px;transform:scaleX(1.1126);transform-origin:0 50%">Alle</span>
<span class="t" id="t50" style="top:411.22px;font-size:21px;line-height:21px;color:#333;font-weight:700;right:1839.85px;transform:scaleX(1.2493);transform-origin:100% 50%;-webkit-text-stroke:0.3px #333">Distanz</span>
<span class="t" id="t51" style="top:411.22px;font-size:21px;line-height:21px;color:#333;font-weight:700;letter-spacing:0.26px;right:1747.51px;transform:scaleX(1.3200);transform-origin:100% 50%;-webkit-text-stroke:0.3px #333">Zeit</span>
<span class="t" id="t52" style="top:411.22px;font-size:21px;line-height:21px;color:#333;font-weight:700;left:316.85px;transform:scaleX(1.2215);transform-origin:0 50%;-webkit-text-stroke:0.3px #333">Pace</span>
<span class="t" id="t53" style="top:411.22px;font-size:21px;line-height:21px;color:#333;font-weight:700;left:466.85px;transform:scaleX(1.2812);transform-origin:0 50%;-webkit-text-stroke:0.3px #333">Diff.</span>
<span class="t" id="t54" style="top:455.50px;font-size:21.5px;line-height:21.5px;color:#333;left:18.82px;transform:scaleX(1.2468);transform-origin:0 50%">1.</span>
<span class="t" id="t55" style="top:455.50px;font-size:21.5px;line-height:21.5px;color:#333;right:1821.12px;transform:scaleX(1.2129);transform-origin:100% 50%">1.00 km</span>
<span class="t" id="t56" style="top:455.50px;font-size:21.5px;line-height:21.5px;color:#333;right:1736.22px;transform:scaleX(1.2414);transform-origin:100% 50%">3:35</span>
<span class="t" id="t57" style="top:455.50px;font-size:21.5px;line-height:21.5px;color:#333;left:318.82px;transform:scaleX(1.2223);transform-origin:0 50%">3:35</span>
<span class="t" id="t58" style="top:459.31px;font-size:17px;line-height:17px;color:#333;left:371.56px;transform:scaleX(1.3200);transform-origin:0 50%">/km</span>
<span class="t" id="t59" style="top:459.31px;font-size:17px;line-height:17px;color:#3b8a1f;letter-spacing:0.19px;right:1442.11px;transform:scaleX(1.3200);transform-origin:100% 50%">/km</span>
<span class="t" id="t60" style="top:455.50px;font-size:21.5px;line-height:21.5px;color:#3b8a1f;right:1478.22px;transform:scaleX(1.2970);transform-origin:100% 50%">+0:14</span>
<span class="t" id="t61" style="top:501.80px;font-size:21.5px;line-height:21.5px;color:#333;left:18.82px;transform:scaleX(1.2468);transform-origin:0 50%">2.</span>
<span class="t" id="t62" style="top:501.80px;font-size:21.5px;line-height:21.5px;color:#333;right:1821.12px;transform:scaleX(1.2129);transform-origin:100% 50%">1.00 km</span>
<span class="t" id="t63" style="top:501.80px;font-size:21.5px;line-height:21.5px;color:#333;right:1736.22px;transform:scaleX(1.2414);transform-origin:100% 50%">3:53</span>
<span class="t" id="t64" style="top:501.80px;font-size:21.5px;line-height:21.5px;color:#333;left:318.82px;transform:scaleX(1.2223);transform-origin:0 50%">3:53</span>
<span class="t" id="t65" style="top:505.61px;font-size:17px;line-height:17px;color:#333;left:371.56px;transform:scaleX(1.3200);transform-origin:0 50%">/km</span>
<span class="t" id="t66" style="top:505.61px;font-size:17px;line-height:17px;color:#8c1d33;letter-spacing:0.19px;right:1442.11px;transform:scaleX(1.3200);transform-origin:100% 50%">/km</span>
<span class="t" id="t67" style="top:501.80px;font-size:21.5px;line-height:21.5px;color:#8c1d33;right:1478.22px;transform:scaleX(1.2846);transform-origin:100% 50%">-0:04</span>
<span class="t" id="t68" style="top:548.10px;font-size:21.5px;line-height:21.5px;color:#333;left:18.82px;transform:scaleX(1.2468);transform-origin:0 50%">3.</span>
<span class="t" id="t69" style="top:548.10px;font-size:21.5px;line-height:21.5px;color:#333;right:1821.12px;transform:scaleX(1.2129);transform-origin:100% 50%">1.00 km</span>
<span class="t" id="t70" style="top:548.10px;font-size:21.5px;line-height:21.5px;color:#333;right:1736.22px;transform:scaleX(1.2414);transform-origin:100% 50%">3:52</span>
<span class="t" id="t71" style="top:548.10px;font-size:21.5px;line-height:21.5px;color:#333;left:318.82px;transform:scaleX(1.2223);transform-origin:0 50%">3:52</span>
<span class="t" id="t72" style="top:551.91px;font-size:17px;line-height:17px;color:#333;left:371.56px;transform:scaleX(1.3200);transform-origin:0 50%">/km</span>
<span class="t" id="t73" style="top:551.91px;font-size:17px;line-height:17px;color:#8c1d33;letter-spacing:0.19px;right:1442.11px;transform:scaleX(1.3200);transform-origin:100% 50%">/km</span>
<span class="t" id="t74" style="top:548.10px;font-size:21.5px;line-height:21.5px;color:#8c1d33;right:1478.22px;transform:scaleX(1.2846);transform-origin:100% 50%">-0:03</span>
<span class="t" id="t75" style="top:594.40px;font-size:21.5px;line-height:21.5px;color:#333;left:18.82px;transform:scaleX(1.2468);transform-origin:0 50%">4.</span>
<span class="t" id="t76" style="top:594.40px;font-size:21.5px;line-height:21.5px;color:#333;right:1821.12px;transform:scaleX(1.2129);transform-origin:100% 50%">1.00 km</span>
<span class="t" id="t77" style="top:594.40px;font-size:21.5px;line-height:21.5px;color:#333;right:1736.22px;transform:scaleX(1.2414);transform-origin:100% 50%">3:54</span>
<span class="t" id="t78" style="top:594.40px;font-size:21.5px;line-height:21.5px;color:#333;left:318.82px;transform:scaleX(1.2223);transform-origin:0 50%">3:54</span>
<span class="t" id="t79" style="top:598.21px;font-size:17px;line-height:17px;color:#333;left:371.56px;transform:scaleX(1.3200);transform-origin:0 50%">/km</span>
<span class="t" id="t80" style="top:598.21px;font-size:17px;line-height:17px;color:#8c1d33;letter-spacing:0.19px;right:1442.11px;transform:scaleX(1.3200);transform-origin:100% 50%">/km</span>
<span class="t" id="t81" style="top:594.40px;font-size:21.5px;line-height:21.5px;color:#8c1d33;right:1478.22px;transform:scaleX(1.2846);transform-origin:100% 50%">-0:05</span>
<span class="t" id="t82" style="top:640.70px;font-size:21.5px;line-height:21.5px;color:#333;left:18.82px;transform:scaleX(1.2468);transform-origin:0 50%">5.</span>
<span class="t" id="t83" style="top:640.70px;font-size:21.5px;line-height:21.5px;color:#333;right:1821.12px;transform:scaleX(1.2129);transform-origin:100% 50%">1.00 km</span>
<span class="t" id="t84" style="top:640.70px;font-size:21.5px;line-height:21.5px;color:#333;right:1736.22px;transform:scaleX(1.2414);transform-origin:100% 50%">3:52</span>
<span class="t" id="t85" style="top:640.70px;font-size:21.5px;line-height:21.5px;color:#333;left:318.82px;transform:scaleX(1.2223);transform-origin:0 50%">3:52</span>
<span class="t" id="t86" style="top:644.51px;font-size:17px;line-height:17px;color:#333;left:371.56px;transform:scaleX(1.3200);transform-origin:0 50%">/km</span>
<span class="t" id="t87" style="top:644.51px;font-size:17px;line-height:17px;color:#8c1d33;letter-spacing:0.19px;right:1442.11px;transform:scaleX(1.3200);transform-origin:100% 50%">/km</span>
<span class="t" id="t88" style="top:640.70px;font-size:21.5px;line-height:21.5px;color:#8c1d33;right:1478.22px;transform:scaleX(1.2846);transform-origin:100% 50%">-0:03</span>
<span class="t" id="t89" style="top:687.00px;font-size:21.5px;line-height:21.5px;color:#333;left:18.82px;transform:scaleX(1.2468);transform-origin:0 50%">6.</span>
<span class="t" id="t90" style="top:687.00px;font-size:21.5px;line-height:21.5px;color:#333;right:1821.12px;transform:scaleX(1.2129);transform-origin:100% 50%">0.01 km</span>
<span class="t" id="t91" style="top:687.00px;font-size:21.5px;line-height:21.5px;color:#333;right:1736.22px;transform:scaleX(1.2414);transform-origin:100% 50%">0:01</span>
<span class="t" id="t92" style="top:687.00px;font-size:21.5px;line-height:21.5px;color:#333;left:318.82px;transform:scaleX(1.2223);transform-origin:0 50%">3:20</span>
<span class="t" id="t93" style="top:690.81px;font-size:17px;line-height:17px;color:#333;left:371.56px;transform:scaleX(1.3200);transform-origin:0 50%">/km</span>
<span class="t" id="t94" style="top:690.81px;font-size:17px;line-height:17px;color:#3b8a1f;letter-spacing:0.19px;right:1442.11px;transform:scaleX(1.3200);transform-origin:100% 50%">/km</span>
<span class="t" id="t95" style="top:687.00px;font-size:21.5px;line-height:21.5px;color:#3b8a1f;right:1478.22px;transform:scaleX(1.2970);transform-origin:100% 50%">+0:29</span>
<span class="t" id="t96" style="top:735.51px;font-size:17px;line-height:17px;color:#333;left:134.87px;transform:scaleX(1.2380);transform-origin:0 50%">Average (total)</span>
<span class="t" id="t97" style="top:735.51px;font-size:17px;line-height:17px;color:#333;left:334.87px;transform:scaleX(1.2682);transform-origin:0 50%">3:49</span>
<span class="t" id="t98" style="top:736.78px;font-size:15.5px;line-height:15.5px;color:#7a7a7a;left:377.15px;transform:scaleX(1.2217);transform-origin:0 50%">/km</span>
<span class="t" id="t99" style="top:450.97px;font-size:20px;line-height:20px;color:#3c3c3c;letter-spacing:0.21px;left:633.90px;transform:scaleX(1.3200);transform-origin:0 50%">04:00</span>
<span class="t" id="t100" style="top:522.87px;font-size:20px;line-height:20px;color:#3c3c3c;letter-spacing:0.21px;left:633.90px;transform:scaleX(1.3200);transform-origin:0 50%">03:00</span>
<span class="t" id="t101" style="top:594.77px;font-size:20px;line-height:20px;color:#3c3c3c;letter-spacing:0.21px;left:633.90px;transform:scaleX(1.3200);transform-origin:0 50%">02:00</span>
<span class="t" id="t102" style="top:666.67px;font-size:20px;line-height:20px;color:#3c3c3c;letter-spacing:0.21px;left:633.90px;transform:scaleX(1.3200);transform-origin:0 50%">01:00</span>
<span class="t" id="t103" style="top:738.57px;font-size:20px;line-height:20px;color:#3c3c3c;letter-spacing:0.21px;left:633.90px;transform:scaleX(1.3200);transform-origin:0 50%">00:00</span>
<span class="t" id="t104" style="top:757.47px;font-size:20px;line-height:20px;color:#3c3c3c;left:883.90px;transform:translateX(-50%) scaleX(1.2966);transform-origin:50% 50%">1 km</span>
<span class="t" id="t105" style="top:757.47px;font-size:20px;line-height:20px;color:#3c3c3c;left:1057.15px;transform:translateX(-50%) scaleX(1.2966);transform-origin:50% 50%">1 km</span>
<span class="t" id="t106" style="top:757.47px;font-size:20px;line-height:20px;color:#3c3c3c;left:1230.40px;transform:translateX(-50%) scaleX(1.2966);transform-origin:50% 50%">1 km</span>
<span class="t" id="t107" style="top:757.47px;font-size:20px;line-height:20px;color:#3c3c3c;left:1403.90px;transform:translateX(-50%) scaleX(1.2966);transform-origin:50% 50%">1 km</span>
<span class="t" id="t108" style="top:757.47px;font-size:20px;line-height:20px;color:#3c3c3c;left:1577.50px;transform:translateX(-50%) scaleX(1.2966);transform-origin:50% 50%">1 km</span>
<span class="t" id="t109" style="top:757.47px;font-size:20px;line-height:20px;color:#3c3c3c;left:1750.75px;transform:translateX(-50%) scaleX(1.3098);transform-origin:50% 50%">0.01 km</span>
<span class="t" id="t110" style="top:479.32px;font-size:19px;line-height:19px;color:#ffffff;left:812.96px;transform:scaleX(1.2432);transform-origin:0 50%">durchschn: 3:44</span>
<span class="t" id="t111" style="top:875.18px;font-size:22px;line-height:22px;color:#333;right:1739.99px;transform:scaleX(1.1688);transform-origin:100% 50%">bpm</span>
<span class="t" id="t112" style="top:869.25px;font-size:29px;line-height:29px;color:#333;font-weight:700;right:1799.11px;transform:scaleX(1.2356);transform-origin:100% 50%;-webkit-text-stroke:0.3px #333">156</span>
<span class="t" id="t113" style="top:904.78px;font-size:22px;line-height:22px;color:#333;left:26.09px;transform:scaleX(1.1224);transform-origin:0 50%">durchschn. Herzfreq...</span>
<span class="t" id="t114" style="top:875.18px;font-size:22px;line-height:22px;color:#333;right:1457.49px;transform:scaleX(1.2227);transform-origin:100% 50%">%</span>
<span class="t" id="t115" style="top:869.25px;font-size:29px;line-height:29px;color:#333;font-weight:700;right:1491.40px;transform:scaleX(1.2766);transform-origin:100% 50%;-webkit-text-stroke:0.3px #333">84</span>
<span class="t" id="t116" style="top:904.78px;font-size:22px;line-height:22px;color:#333;left:308.99px;transform:scaleX(1.1205);transform-origin:0 50%">durchschn. Herzfreq...</span>
<span class="t" id="t117" style="top:960.28px;font-size:22px;line-height:22px;color:#333;right:1739.99px;transform:scaleX(1.1688);transform-origin:100% 50%">bpm</span>
<span class="t" id="t118" style="top:954.35px;font-size:29px;line-height:29px;color:#333;font-weight:700;right:1799.11px;transform:scaleX(1.2356);transform-origin:100% 50%;-webkit-text-stroke:0.3px #333">176</span>
<span class="t" id="t119" style="top:989.88px;font-size:22px;line-height:22px;color:#333;right:1739.99px;transform:scaleX(1.1429);transform-origin:100% 50%">max. Herzfrequenz</span>
<span class="t" id="t120" style="top:960.28px;font-size:22px;line-height:22px;color:#333;right:1457.49px;transform:scaleX(1.2227);transform-origin:100% 50%">%</span>
<span class="t" id="t121" style="top:954.35px;font-size:29px;line-height:29px;color:#333;font-weight:700;right:1491.40px;transform:scaleX(1.2766);transform-origin:100% 50%;-webkit-text-stroke:0.3px #333">95</span>
<span class="t" id="t122" style="top:989.88px;font-size:22px;line-height:22px;color:#333;right:1457.49px;transform:scaleX(1.1408);transform-origin:100% 50%">max. Herzfrequenz</span>
<span class="t" id="t123" style="top:1045.38px;font-size:22px;line-height:22px;color:#333;right:1739.99px;transform:scaleX(1.1302);transform-origin:100% 50%">kcal</span>
<span class="t" id="t124" style="top:1039.45px;font-size:29px;line-height:29px;color:#333;font-weight:700;right:1794.61px;transform:scaleX(1.2087);transform-origin:100% 50%;-webkit-text-stroke:0.3px #333">290</span>
<span class="t" id="t125" style="top:1074.98px;font-size:22px;line-height:22px;color:#333;right:1739.99px;transform:scaleX(1.1131);transform-origin:100% 50%">Energie</span>
<span class="t" id="t126" style="top:1039.45px;font-size:29px;line-height:29px;color:#333;font-weight:700;right:1457.11px;transform:scaleX(1.2952);transform-origin:100% 50%;-webkit-text-stroke:0.3px #333">43</span>
<span class="t" id="t127" style="top:1074.98px;font-size:22px;line-height:22px;color:#333;right:1457.49px;transform:scaleX(1.0682);transform-origin:100% 50%">TRIMP</span>
<span class="t" id="t128" style="top:1124.55px;font-size:29px;line-height:29px;color:#333;font-weight:700;right:1739.61px;transform:scaleX(1.2842);transform-origin:100% 50%;-webkit-text-stroke:0.3px #333">3.1</span>
<span class="t" id="t129" style="top:1160.08px;font-size:22px;line-height:22px;color:#333;right:1739.99px;transform:scaleX(1.1478);transform-origin:100% 50%">Trainingseffekt</span>
<span class="t" id="t130" style="top:1124.55px;font-size:29px;line-height:29px;color:#333;font-weight:700;right:1457.11px;transform:scaleX(1.2768);transform-origin:100% 50%;-webkit-text-stroke:0.3px #333">0.4</span>
<span class="t" id="t131" style="top:1160.08px;font-size:22px;line-height:22px;color:#333;left:308.99px;transform:scaleX(1.1044);transform-origin:0 50%">Anaerobic Training ...</span>
<span class="t" id="t132" style="top:1209.65px;font-size:29px;line-height:29px;color:#333;font-weight:700;letter-spacing:1.11px;right:1738.14px;transform:scaleX(1.3200);transform-origin:100% 50%;-webkit-text-stroke:0.3px #333">+5/+4</span>
<span class="t" id="t133" style="top:1245.18px;font-size:22px;line-height:22px;color:#333;left:56.69px;transform:scaleX(1.0836);transform-origin:0 50%;clip-path:inset(0 0 9px 0)">Performance con...</span>
<span class="t" id="t134" style="top:908.97px;font-size:20px;line-height:20px;color:#3c3c3c;right:1302.40px;transform:scaleX(1.2729);transform-origin:100% 50%">100 %</span>
<span class="t" id="t135" style="top:966.27px;font-size:20px;line-height:20px;color:#3c3c3c;right:1302.40px;transform:scaleX(1.2875);transform-origin:100% 50%">90 %</span>
<span class="t" id="t136" style="top:1023.57px;font-size:20px;line-height:20px;color:#3c3c3c;right:1302.40px;transform:scaleX(1.2875);transform-origin:100% 50%">80 %</span>
<span class="t" id="t137" style="top:1080.87px;font-size:20px;line-height:20px;color:#3c3c3c;right:1302.40px;transform:scaleX(1.2875);transform-origin:100% 50%">70 %</span>
<span class="t" id="t138" style="top:1138.17px;font-size:20px;line-height:20px;color:#3c3c3c;right:1302.40px;transform:scaleX(1.2875);transform-origin:100% 50%">60 %</span>
<span class="t" id="t139" style="top:1195.47px;font-size:20px;line-height:20px;color:#3c3c3c;right:1302.40px;transform:scaleX(1.2875);transform-origin:100% 50%">50 %</span>
<span class="t" id="t140" style="top:1214.97px;font-size:20px;line-height:20px;color:#3c3c3c;left:833.30px;transform:translateX(-50%) scaleX(1.3193);transform-origin:50% 50%">0.5 km</span>
<span class="t" id="t141" style="top:1214.97px;font-size:20px;line-height:20px;color:#3c3c3c;left:955.35px;transform:translateX(-50%) scaleX(1.2966);transform-origin:50% 50%">1 km</span>
<span class="t" id="t142" style="top:1214.97px;font-size:20px;line-height:20px;color:#3c3c3c;left:1077.40px;transform:translateX(-50%) scaleX(1.3193);transform-origin:50% 50%">1.5 km</span>
<span class="t" id="t143" style="top:1214.97px;font-size:20px;line-height:20px;color:#3c3c3c;left:1199.45px;transform:translateX(-50%) scaleX(1.2966);transform-origin:50% 50%">2 km</span>
<span class="t" id="t144" style="top:1214.97px;font-size:20px;line-height:20px;color:#3c3c3c;left:1321.50px;transform:translateX(-50%) scaleX(1.3193);transform-origin:50% 50%">2.5 km</span>
<span class="t" id="t145" style="top:1214.97px;font-size:20px;line-height:20px;color:#3c3c3c;left:1443.55px;transform:translateX(-50%) scaleX(1.2966);transform-origin:50% 50%">3 km</span>
<span class="t" id="t146" style="top:1214.97px;font-size:20px;line-height:20px;color:#3c3c3c;left:1565.60px;transform:translateX(-50%) scaleX(1.3193);transform-origin:50% 50%">3.5 km</span>
<span class="t" id="t147" style="top:1214.97px;font-size:20px;line-height:20px;color:#3c3c3c;left:1687.65px;transform:translateX(-50%) scaleX(1.2966);transform-origin:50% 50%">4 km</span>
<span class="t" id="t148" style="top:1214.97px;font-size:20px;line-height:20px;color:#3c3c3c;left:1809.70px;transform:translateX(-50%) scaleX(1.3193);transform-origin:50% 50%">4.5 km</span>
<span class="t" id="t149" style="top:1214.97px;font-size:20px;line-height:20px;color:#3c3c3c;left:1931.75px;transform:translateX(-50%) scaleX(1.2966);transform-origin:50% 50%">5 km</span>
<span class="t" id="t150" style="top:1022.62px;font-size:19px;line-height:19px;color:#ffffff;left:722.36px;transform:scaleX(1.2300);transform-origin:0 50%">durchschn: 84 %</span>
<span class="t" id="t151" style="top:1332.98px;font-size:22px;line-height:22px;color:#333;right:1722.59px;transform:scaleX(1.2755);transform-origin:100% 50%">/km</span>
<span class="t" id="t152" style="top:1327.05px;font-size:29px;line-height:29px;color:#333;font-weight:700;right:1777.40px;transform:scaleX(1.2471);transform-origin:100% 50%;-webkit-text-stroke:0.3px #333">3:49</span>
<span class="t" id="t153" style="top:1362.38px;font-size:22px;line-height:22px;color:#333;right:1722.59px;transform:scaleX(1.0961);transform-origin:100% 50%">durchschn. Pace</span>
<span class="t" id="t154" style="top:1332.98px;font-size:22px;line-height:22px;color:#333;right:1423.89px;transform:scaleX(1.2313);transform-origin:100% 50%">km/h</span>
<span class="t" id="t155" style="top:1327.05px;font-size:29px;line-height:29px;color:#333;font-weight:700;right:1492.20px;transform:scaleX(1.2203);transform-origin:100% 50%;-webkit-text-stroke:0.3px #333">15.7</span>
<span class="t" id="t156" style="top:1362.38px;font-size:22px;line-height:22px;color:#333;left:325.79px;transform:scaleX(1.1056);transform-origin:0 50%">durchschn. Geschwin...</span>
<span class="t" id="t157" style="top:1411.75px;font-size:29px;line-height:29px;color:#333;font-weight:700;right:1723.70px;transform:scaleX(1.2427);transform-origin:100% 50%;-webkit-text-stroke:0.3px #333">63.40</span>
<span class="t" id="t158" style="top:1446.98px;font-size:22px;line-height:22px;color:#333;left:79.79px;transform:scaleX(1.0713);transform-origin:0 50%">Effektiver VO</span>
<span class="t" id="t159" style="top:1456.70px;font-size:15px;line-height:15px;color:#333;left:216.68px;transform:scaleX(1.2764);transform-origin:0 50%">2</span>
<span class="t" id="t160" style="top:1446.98px;font-size:22px;line-height:22px;color:#333;left:227.29px;transform:scaleX(1.3575);transform-origin:0 50%">max</span>
<span class="t" id="t161" style="top:1331.97px;font-size:20px;line-height:20px;color:#333;left:757.90px;transform:scaleX(1.0572);transform-origin:0 50%">Pace</span>
<span class="t" id="t162" style="top:1331.97px;font-size:20px;line-height:20px;color:#333;left:862.50px;transform:scaleX(1.1815);transform-origin:0 50%">Gleitender Mittelwert</span>
<span class="t" id="t163" style="top:1331.97px;font-size:20px;line-height:20px;color:#333;left:1135.50px;transform:scaleX(1.1322);transform-origin:0 50%">Grade adjusted pace (beta)</span>
<span class="t" id="t164" style="top:1367.47px;font-size:20px;line-height:20px;color:#3c3c3c;letter-spacing:0.29px;left:633.50px;transform:scaleX(1.3200);transform-origin:0 50%">02:00</span>
<span class="t" id="t165" style="top:21.81px;font-size:23.5px;line-height:23.5px;color:#e9f0f3;font-weight:700;left:499.51px;transform:scaleX(1.1120);transform-origin:0 50%;-webkit-text-stroke:0.45px #e9f0f3">Konfiguration</span>
<span class="t" id="t166" style="top:21.81px;font-size:23.5px;line-height:23.5px;color:#e9f0f3;font-weight:700;left:762.11px;transform:scaleX(1.1127);transform-origin:0 50%;-webkit-text-stroke:0.45px #e9f0f3">Tools</span>
<span class="t" id="t167" style="top:21.81px;font-size:23.5px;line-height:23.5px;color:#e9f0f3;font-weight:700;left:936.71px;transform:scaleX(1.1085);transform-origin:0 50%;-webkit-text-stroke:0.45px #e9f0f3">Suche</span>
<span class="t" id="t168" style="top:21.81px;font-size:23.5px;line-height:23.5px;color:#e9f0f3;font-weight:700;left:1137.51px;transform:scaleX(1.1255);transform-origin:0 50%;-webkit-text-stroke:0.45px #e9f0f3">Support</span>
<span class="t" id="t169" style="top:6.57px;font-size:48px;line-height:48px;color:#f3f8f8;font-style:italic;left:98.36px;transform:scaleX(1.1058);transform-origin:0 50%">RUNALYZE</span>
</div></body></html>
